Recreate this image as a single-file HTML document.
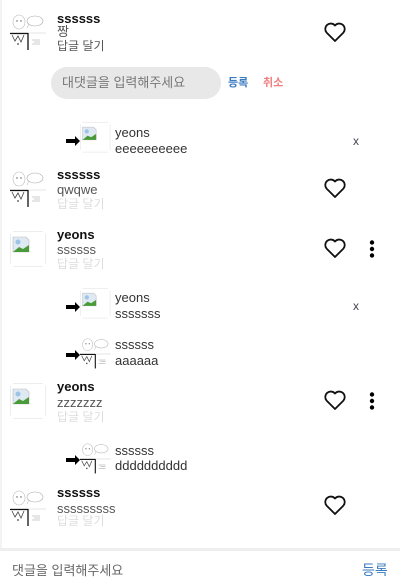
<!DOCTYPE html>
<html><head><meta charset="utf-8"><style>
*{margin:0;padding:0;box-sizing:border-box}
body{width:400px;height:587px;background:#fff;position:relative;overflow:hidden;font-family:"Liberation Sans","Noto Sans CJK KR",sans-serif}
.lb{position:absolute;left:0;top:0;width:2px;height:549px;background:#f3f3f3}
.a{position:absolute}
.t{position:absolute;font-size:13px;line-height:14px;white-space:nowrap}
.n{font-weight:bold;color:#111}
.c{color:#555}
.r{color:#333}
.d{color:#ddd;font-size:12px}
.d1{color:#555;font-size:12px}
.x{position:absolute;font-size:12px;color:#445;}
.heart{position:absolute;width:22px;height:20px}
.dots{position:absolute;width:6px;height:18px}
</style></head><body>
<div class="lb"></div>
<svg width="0" height="0" style="position:absolute">
<defs>
<g id="cart">
<rect x="0" y="0" width="36" height="37" fill="#fff"/>
<ellipse cx="9" cy="9" rx="6" ry="7" fill="none" stroke="#bbb" stroke-width="0.6"/>
<circle cx="7" cy="8" r="0.7" fill="#555"/><circle cx="11" cy="8" r="0.7" fill="#555"/>
<ellipse cx="25" cy="8" rx="8" ry="5" fill="none" stroke="#aaa" stroke-width="0.6"/>
<line x1="19" y1="11" x2="17" y2="15" stroke="#aaa" stroke-width="0.5"/>
<line x1="0" y1="20" x2="36" y2="20" stroke="#ccc" stroke-width="0.6"/>
<line x1="0" y1="20.5" x2="18" y2="20.5" stroke="#111" stroke-width="1.3"/>
<line x1="18" y1="20" x2="18" y2="37" stroke="#111" stroke-width="1.3"/>
<path d="M2 22 L5 28 L8 23 L11 29 L14 22" fill="none" stroke="#444" stroke-width="0.8"/>
<circle cx="8" cy="31" r="0.9" fill="#444"/>
<path d="M22 27 h8 M24 29 h6 M22 31 h8" stroke="#999" stroke-width="0.6"/>
</g>
<g id="brk">
<rect x="0" y="0" width="36" height="36" fill="#fff"/>
<path d="M3 0.5 H33 M0.5 3 V33 M3 35.5 H33 M35.5 3 V33" stroke="#ededed" stroke-width="1"/>
<path d="M3 6 h13 l3 3 v12 h-16z" fill="#dfe9f3" stroke="#bbb" stroke-width="0.6"/>
<path d="M3 21 l6 -5 l4 2 l6 -4 v7z" fill="#4a9a3a"/>
<circle cx="8" cy="11" r="2.5" fill="#9ec3e8"/>
</g>
<g id="arr"><path d="M0 3 h9 v-3 l5 5 l-5 5 v-3 h-9z" fill="#000"/></g>
<g id="hrt"><path d="M11 19 L2.6 10.6 A5 5 0 0 1 11 3.5 A5 5 0 0 1 19.4 10.6 Z" fill="none" stroke="#111" stroke-width="1.8" stroke-linejoin="round"/></g>
</defs></svg>

<svg class="a" style="left:10px;top:13px" width="36" height="37"><use href="#cart"/></svg>
<div class="t n" style="left:57px;top:12px">ssssss</div>
<div class="t c" style="left:57px;top:25px">짱</div>
<div class="t d1" style="left:57px;top:39px">답글 달기</div>
<svg class="heart" style="left:324px;top:22px"><use href="#hrt"/></svg>
<div class="a" style="left:51px;top:67px;width:170px;height:32px;border-radius:16px;background:#e8e8e8"></div>
<div class="t" style="left:62px;top:76px;color:#777;font-size:13px">대댓글을 입력해주세요</div>
<div class="t" style="left:228px;top:76px;color:#3a7bc0;font-size:11px;font-weight:bold">등록</div>
<div class="t" style="left:263px;top:76px;color:#f08080;font-size:11px;font-weight:bold">취소</div>

<svg class="a" style="left:66px;top:136px" width="14" height="10"><use href="#arr"/></svg>
<svg class="a" style="left:80px;top:122px" width="36" height="36"><use href="#brk" transform="scale(0.85)"/></svg>
<div class="t r" style="left:115px;top:126px">yeons</div>
<div class="t r" style="left:115px;top:142px">eeeeeeeeee</div>
<div class="x" style="left:353px;top:134px">x</div>

<svg class="a" style="left:10px;top:170px" width="36" height="37"><use href="#cart"/></svg>
<div class="t n" style="left:57px;top:168px">ssssss</div>
<div class="t c" style="left:57px;top:183px">qwqwe</div>
<div class="t d" style="left:57px;top:197px">답글 달기</div>
<svg class="heart" style="left:324px;top:178px"><use href="#hrt"/></svg>

<svg class="a" style="left:10px;top:231px" width="36" height="36"><use href="#brk"/></svg>
<div class="t n" style="left:57px;top:228px">yeons</div>
<div class="t c" style="left:57px;top:243px">ssssss</div>
<div class="t d" style="left:57px;top:257px">답글 달기</div>
<svg class="heart" style="left:324px;top:238px"><use href="#hrt"/></svg>
<svg class="dots" style="left:369px;top:240px"><circle cx="3" cy="2.5" r="2.2"/><circle cx="3" cy="9" r="2.2"/><circle cx="3" cy="15.5" r="2.2"/></svg>

<svg class="a" style="left:66px;top:302px" width="14" height="10"><use href="#arr"/></svg>
<svg class="a" style="left:80px;top:288px" width="36" height="36"><use href="#brk" transform="scale(0.85)"/></svg>
<div class="t r" style="left:115px;top:291px">yeons</div>
<div class="t r" style="left:115px;top:307px">sssssss</div>
<div class="x" style="left:353px;top:299px">x</div>

<svg class="a" style="left:66px;top:350px" width="14" height="10"><use href="#arr"/></svg>
<svg class="a" style="left:80px;top:337px" width="31" height="32"><use href="#cart" transform="scale(0.85)"/></svg>
<div class="t r" style="left:115px;top:338px">ssssss</div>
<div class="t r" style="left:115px;top:354px">aaaaaa</div>

<svg class="a" style="left:10px;top:383px" width="36" height="36"><use href="#brk"/></svg>
<div class="t n" style="left:57px;top:380px">yeons</div>
<div class="t c" style="left:57px;top:396px">zzzzzzz</div>
<div class="t d" style="left:57px;top:410px">답글 달기</div>
<svg class="heart" style="left:324px;top:390px"><use href="#hrt"/></svg>
<svg class="dots" style="left:369px;top:392px"><circle cx="3" cy="2.5" r="2.2"/><circle cx="3" cy="9" r="2.2"/><circle cx="3" cy="15.5" r="2.2"/></svg>

<svg class="a" style="left:66px;top:455px" width="14" height="10"><use href="#arr"/></svg>
<svg class="a" style="left:80px;top:442px" width="31" height="32"><use href="#cart" transform="scale(0.85)"/></svg>
<div class="t r" style="left:115px;top:444px">ssssss</div>
<div class="t r" style="left:115px;top:459px">dddddddddd</div>

<svg class="a" style="left:10px;top:489px" width="36" height="37"><use href="#cart"/></svg>
<div class="t n" style="left:57px;top:486px">ssssss</div>
<div class="t c" style="left:57px;top:502px">sssssssss</div>
<div class="t d" style="left:57px;top:514px">답글 달기</div>
<svg class="heart" style="left:324px;top:495px"><use href="#hrt"/></svg>

<div class="a" style="left:0;top:548px;width:400px;height:3px;background:#eee"></div>
<div class="t" style="left:12px;top:564px;color:#666;font-size:13px">댓글을 입력해주세요</div>
<div class="t" style="left:362px;top:563px;color:#3a7bc0;font-size:14px">등록</div>
</body></html>
